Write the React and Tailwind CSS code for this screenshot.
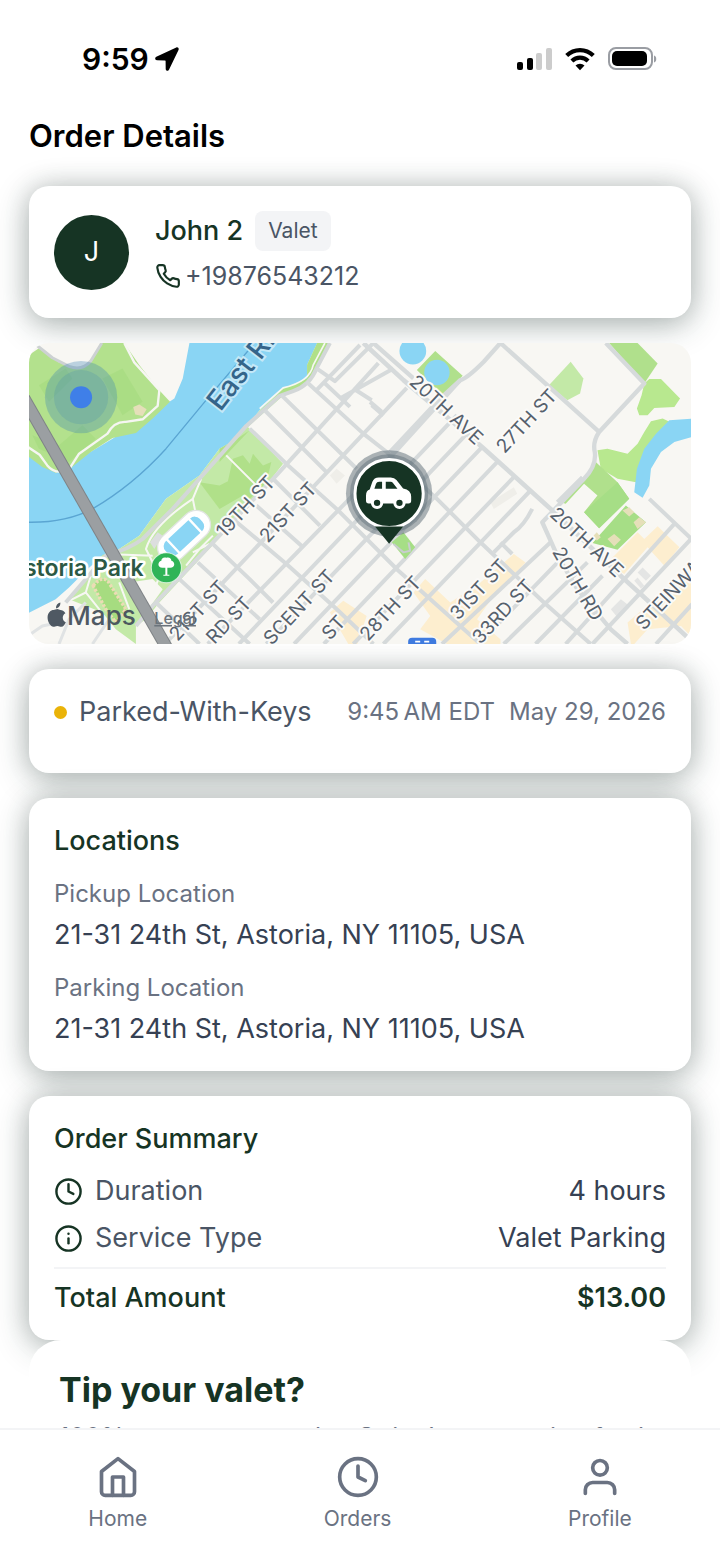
import { FiHome, FiClock, FiUser, FiPhone, FiInfo } from 'react-icons/fi'

const CARD =
  'rounded-[20px] bg-white px-[25px] shadow-[0_7px_34px_rgba(22,52,46,0.3),0_0_26px_rgba(0,0,0,0.14)]'

const locations = [
  { label: 'Pickup Location', address: '21-31 24th St, Astoria, NY 11105, USA' },
  { label: 'Parking Location', address: '21-31 24th St, Astoria, NY 11105, USA' },
]

const summary = [
  { icon: FiClock, label: 'Duration', value: '4 hours' },
  { icon: FiInfo, label: 'Service Type', value: 'Valet Parking' },
]

const tabs = [
  { icon: FiHome, label: 'Home' },
  { icon: FiClock, label: 'Orders' },
  { icon: FiUser, label: 'Profile' },
]

const streetLabels = [
  { text: '19TH ST', x: 196, y: 195, r: -47 },
  { text: '21ST ST', x: 239, y: 200, r: -47 },
  { text: '21ST ST', x: 149, y: 298, r: -47 },
  { text: 'RD ST', x: 186, y: 301, r: -47 },
  { text: 'SCENT ST', x: 243, y: 302, r: -47 },
  { text: 'ST', x: 301, y: 297, r: -47 },
  { text: '28TH ST', x: 339, y: 298, r: -47 },
  { text: '31ST ST', x: 429, y: 277, r: -47 },
  { text: '33RD ST', x: 451, y: 301, r: -47 },
  { text: '27TH ST', x: 475, y: 111, r: -47 },
  { text: 'STEINWAY', x: 614, y: 287, r: -47 },
  { text: '20TH AVE', x: 379, y: 40, r: 43 },
  { text: '20TH AVE', x: 519, y: 172, r: 43 },
  { text: '20TH RD', x: 522, y: 208, r: 60 },
]

function StatusBar() {
  return (
    <div className="flex h-[118px] shrink-0 items-center justify-between pr-[63px] pl-[82px]">
      <div className="flex items-center gap-1.5 text-black">
        <span className="text-[30px] leading-9 font-semibold">9:59</span>
        <svg className="h-6 w-6" viewBox="0 0 24 24" fill="currentColor" aria-hidden="true">
          <path d="M21.3.4 1.300 9.800c-1.800.9-1.400 3.300.7 3.400l8.100.2c.3 0 .5.2.5.5l.1 8.100c0 2.100 2.600 2.500 3.400.6L23.500 2.900C24.200 1.200 22.900-.2 21.300.4Z" />
        </svg>
      </div>
      <div className="flex items-center gap-3">
        <svg className="h-6 w-9" viewBox="0 0 36 24" aria-hidden="true">
          <rect x="0" y="15" width="6" height="8" rx="2" />
          <rect x="10" y="11" width="6" height="12" rx="2" />
          <rect x="19" y="6" width="6" height="17" rx="2" fill="#cccccc" />
          <rect x="29" y="1" width="6" height="22" rx="2" fill="#cccccc" />
        </svg>
        <svg className="h-6 w-[30px]" viewBox="0 0 30 24" fill="none" stroke="#000" strokeWidth="4.200" aria-hidden="true">
          <path d="M1.700 8.600a19 19 0 0 1 26.600 0" />
          <path d="M6.900 14a11.600 11.600 0 0 1 16.200 0" />
          <path d="M15 23.200 10.500 18.600a6.500 6.500 0 0 1 9 0Z" fill="#000" stroke="none" />
        </svg>
        <svg className="h-6 w-[50px]" viewBox="0 0 50 24" aria-hidden="true">
          <rect x="2" y="1" width="43" height="21" rx="7" fill="none" stroke="#9a9da3" strokeWidth="2" />
          <rect x="5" y="4" width="35" height="15" rx="5" />
          <path d="M47 8.500c3 .8 3 6.200 0 7Z" fill="#9a9da3" />
        </svg>
      </div>
    </div>
  )
}

function MapShapes() {
  return (
    <g transform="translate(-9 -8) scale(0.33333)" strokeLinejoin="round">
      {/* water */}
      <path
        fill="#8ad5f4"
        d="M510 24H892L862 90 862 130 790 160 720 225 650 312 600 340 540 420 440 490 360 600 300 640 250 660 200 705 150 755 110 790 27 832V360L110 412 280 310 465 190 490 130Z"
      />
      <path fill="none" stroke="#5aa5d2" strokeWidth="4" d="M27 560Q140 562 220 520 340 450 440 340L560 195 700 30" />

      {/* island */}
      <path
        fill="#b3e18d"
        d="M27 62 60 40 120 82 175 102 212 82 245 24H315L360 90 420 165 452 200 400 250 350 293 280 308 215 350 150 402 110 412 70 395 27 362Z"
      />
      <path fill="#a6dc80" d="M60 150 140 100 160 130 90 200ZM250 130 310 100 370 200 310 240ZM40 300 120 330 190 270 230 310 150 380 60 340Z" opacity=".7" />
      <path fill="none" stroke="#cdd1d3" strokeWidth="9" d="M45 24 100 68 150 94Q190 108 215 78L248 24" />
      <path
        fill="none"
        stroke="#f6f6f2"
        strokeWidth="7"
        d="M315 24 345 82 420 165 415 212 370 252 320 260Q285 258 265 295L180 355 150 402Q110 420 85 390L62 358 27 335"
      />
      <path fill="#e5dfb9" d="M342 215 360 208 382 222 370 242 348 238Z" />

      {/* shoreline park */}
      <path
        fill="#c3e9a7"
        d="M892 24H930L890 100 850 155 790 182 685 275 790 385 700 500 560 650 420 800 380 850 350 870 350 924 290 880 250 830 150 790 250 658 300 640 360 600 440 490 540 420 600 340 650 312 720 225 790 160 862 130 862 90Z"
      />
      <path fill="#b0e089" d="M892 24H930L890 100 850 155 790 182 740 215 790 160 862 130 862 90ZM640 370 670 360 690 385 700 355 730 390 755 380 740 440 690 490 620 460ZM540 440 600 450 640 430 670 450 670 480 600 520ZM600 340 650 312 690 285 600 380Z" />
      <path fill="#a6dc80" stroke="#ecdcb5" strokeWidth="10" strokeDasharray="8 5" d="M222 750Q255 710 275 750L320 820 290 860 260 820Z" />
      <path fill="#f8f7f3" d="M330 740 400 730 430 760 380 830Z" />
      <g fill="none" stroke="#f7f7f3" strokeWidth="6">
        <path d="M545 430 520 490Q400 570 380 640L420 720 400 780M520 490 528 530M150 795 200 770 215 720M620 360 720 460M260 655 400 660M200 770 240 820 290 900M300 740 330 820M500 690 540 640 580 600M520 650 570 625" />
      </g>
      <g transform="rotate(-43 492 603)">
        <rect x="402" y="560" width="185" height="86" rx="43" fill="#fff" stroke="#e2e5e3" strokeWidth="4" />
        <rect x="424" y="577" width="140" height="52" rx="20" fill="#8ad5f4" />
        <path stroke="#fff" strokeWidth="7" d="M450 572V634M540 572V634" />
      </g>
      <path fill="#dcdedf" d="M392 620 415 590 430 600 405 640Z" />

      {/* commercial blocks */}
      <path
        fill="#fdeecf"
        d="M970 795 1040 840 1012 924H985L930 830ZM1215 730 1290 800 1380 740 1480 655 1515 680 1420 780 1370 850 1440 910 1440 924H1280L1200 880 1230 840 1180 770ZM1760 680 1850 590 1870 610 1910 572 1975 635 1930 690 1880 635 1810 715ZM1820 860 2013 695V905L1980 870 1880 880 1840 924H1830Z"
      />

      {/* northern parks */}
      <path fill="#b0e08c" d="M1765 24H1850L1910 85 1870 145Z" />
      <path
        fill="#b8e88f"
        d="M1870 145 1885 132H1920L1977 190 1960 215 1900 218 1880 240 1855 240 1848 220 1862 180ZM1730 345 1760 340 1820 355 1850 325 1870 290 1890 258 1925 250 1950 262 1885 330 1845 440 1790 430 1740 400Z"
      />
      <path fill="#c3e9a7" d="M1585 150 1650 80 1688 130 1678 175 1640 195Z" />
      <path fill="#b0e08c" d="M1725 380 1790 440 1825 490 1735 578 1690 530 1730 480 1685 440ZM1620 500 1685 430 1690 445 1635 505ZM1190 105 1245 48 1327 122 1270 182Z" />
      <path fill="#a6de86" d="M1790 440 1825 490 1735 578 1690 530ZM1815 510 1875 560 1790 642 1715 622Z" />
      <path fill="#e5dfb9" d="M1805 525 1825 515 1840 530 1825 543ZM1838 560 1855 545 1875 560 1850 580ZM1718 600 1728 590 1740 605 1728 615ZM1760 610 1780 595 1800 612 1780 632Z" />
      <path
        fill="#8ad5f4"
        d="M1945 255 2013 250V305L1960 320 1920 350 1890 400 1885 450 1865 487 1840 470 1848 400 1870 340 1905 295Z"
      />
      <circle cx="1178" cy="48" r="40" fill="#8ad5f4" />
      <circle cx="1250" cy="112" r="38" fill="#8ad5f4" />

      {/* minor lots */}
      <path fill="#e4e5e4" d="M1770 820 1800 790 1825 810 1790 845ZM1850 710 1865 695 1890 720 1875 735ZM1840 735 1850 725 1870 750 1860 758Z" />
      <path fill="#efeee9" d="M930 420 950 400 975 420 950 445ZM1410 500 1480 455 1490 475 1420 520Z" />

      {/* shore road */}
      <path
        fill="none"
        stroke="#d3d7d8"
        strokeWidth="12"
        d="M930 24 890 100Q870 150 820 168L780 182 680 272 540 430 460 520 370 610Q330 640 260 660L140 800"
      />
      <path fill="none" stroke="#f7f7f3" strokeWidth="5" d="M915 24 880 90Q870 140 790 158L720 220" />

      {/* street grid */}
      <g fill="none" stroke="#d6dadb" strokeWidth="12">
        <path d="M1075 84 770 420 400 810 350 870M1160 158 437 924M1020 30 890 165M890 100 945 138 1060 24M1120 100 960 190M1320 135 1130 345 565 924" />
        <path d="M1310 240 658 924M1345 290 740 924M1385 335 823 924M1430 380 912 924M1480 425 1000 924M1530 465 1090 924M1535 520Q1510 570 1480 590L1420 650 M1440 620 1475 655" />
        <path d="M1590 620 1265 924M1640 650 1375 924M1700 680 1450 924M1745 720 1545 924M1960 565 1635 924M2010 610 1715 924M2013 805 1905 924" />
        <path d="M735 225 920 410M785 180 1010 400M860 140 1030 295 1100 350 1250 490 1380 620 1570 800 1710 924" />
        <path d="M690 280 805 390 950 520 1135 705 1380 924M760 430 900 570M710 510 850 635M640 550 800 685 945 815 1060 924" />
        <path d="M575 620 690 730 760 800M535 680 720 850M480 730 690 924M410 800 540 924M1055 210 1090 240M1055 195 1000 160M910 140 990 215" />
        <path d="M1030 24 1150 135 1385 335 1590 520 1810 730 1860 775 2000 905" strokeWidth="14" />
        <path d="M1060 24 1180 130M1440 24 1735 290M1440 24 1390 80Q1340 130 1320 135L1260 190 1110 350" strokeWidth="13" />
        <path d="M1755 24 1870 145 1735 290Q1715 320 1722 350 1728 390 1690 430L1565 560 1610 660 1670 760 1770 880 1820 924" strokeWidth="13" />
        <path d="M1685 425 1610 500M1885 490 2013 612M1050 200 1085 230M1055 205 1090 240" />
        <path d="M27 900 70 870 120 860M120 924 150 850 200 800M220 924 270 850" strokeWidth="9" stroke="#e0e3e4" />
      </g>
      <path fill="#a6de86" d="M1115 620 1150 590 1185 635 1155 670Z" />
      <path fill="none" stroke="#c8cdce" strokeWidth="6" d="M1120 625 1150 650 1170 645 1165 620" />

      {/* bridge */}
      <path stroke="#7f8386" strokeWidth="38" d="M10 180 445 940" />
      <path stroke="#9b9fa2" strokeWidth="32" d="M10 180 445 940" />

      {/* station badge */}
      <rect x="1164" y="905" width="84" height="40" rx="12" fill="#3f7be0" />
      <path stroke="#fff" strokeWidth="5" d="M1185 917H1200M1212 917H1227" />
    </g>
  )
}

function OrderMap() {
  return (
    <section aria-label="Parking map" className="overflow-hidden rounded-[20px]">
      <svg className="block h-[301px] w-full" viewBox="0 0 662 300" preserveAspectRatio="xMidYMid slice" role="img">
        <rect width="662" height="300" fill="#f8f7f3" />
        <MapShapes />

        <g fill="#56616d" stroke="#fbfaf8" strokeWidth="4" strokeLinejoin="round" paintOrder="stroke" fontSize="19">
          {streetLabels.map((s, i) => (
            <text key={i} transform={`translate(${s.x} ${s.y}) rotate(${s.r})`}>
              {s.text}
            </text>
          ))}
        </g>
        <text
          transform="translate(192 69) rotate(-52)"
          fill="#35658a"
          stroke="#c4e8f7"
          strokeWidth="4"
          paintOrder="stroke"
          fontSize="28"
          fontWeight="500"
        >
          East River
        </text>
        <text x="-4" y="232" fill="#2c5945" stroke="#fff" strokeWidth="5" strokeLinejoin="round" paintOrder="stroke" fontSize="23" fontWeight="600">
          storia Park
        </text>

        {/* park pin */}
        <circle cx="138" cy="224" r="15" fill="#2fb457" stroke="#fff" strokeOpacity=".7" />
        <path fill="#fff" d="M138 214c3-1 5 1 5 3 4 1 4 7-1 7h-3v7h2v1h-6v-1h2v-7h-3c-5 0-5-6-1-7 0-2 2-4 5-3Z" />

        {/* attribution */}
        <g fill="#46515b" opacity=".95">
          <path d="M29.500 265.200c-1.600 0-2.600.9-3.900.9-2.700 0-6 2.500-6 7.600 0 4.700 3.300 9.200 5.700 9.200 1.500 0 2.200-.9 4.100-.9s2.300.9 3.900.9c2.100 0 3.700-2.700 4.500-4.600-3.900-1.700-4-7.200-.4-9-1.300-2.200-3.300-3.300-5-3.300-1.200 0-2-.8-2.900-.8ZM28 264.400c-.2-3.200 1.600-5.300 4.300-5.800.4 3.200-1.700 5.700-4.300 5.800Z" />
          <text x="39" y="281" fontSize="26" fontWeight="500">
            Maps
          </text>
        </g>
        <text x="126" y="280" fill="#6b737b" fontSize="16" fontWeight="500" textDecoration="underline">
          Legal
        </text>

        {/* current position */}
        <circle cx="53" cy="54" r="36" fill="#3c84b4" opacity=".32" />
        <circle cx="53" cy="54" r="27" fill="#3c84b4" opacity=".2" />
        <circle cx="53" cy="54" r="11" fill="#3f7fe8" />

        {/* vehicle marker */}
        <circle cx="360" cy="150" r="43" fill="#5c6b76" opacity=".5" />
        <circle cx="360" cy="150" r="39" fill="#4b5b68" opacity=".35" />
        <circle cx="360" cy="150" r="34" fill="#163424" stroke="#fff" strokeWidth="3" />
        <path fill="#163424" d="M346 183H374L360 200Z" />
        <g transform="translate(211 -8) scale(0.33333)">
          <path
            fill="#fff"
            fillRule="evenodd"
            d="M378 480Q378 465 389 462L397 439Q402 426 416 426H452Q463 426 469 434L489 459Q513 463 513 484V496Q513 504 505 504H386Q378 504 378 496ZM403 460H426V439H417Q410 439 408 445ZM437 439V460H472L458 442Q456 439 452 439Z"
          />
          <circle cx="411" cy="502" r="14" fill="#163424" stroke="#fff" strokeWidth="9" />
          <circle cx="478" cy="502" r="14" fill="#163424" stroke="#fff" strokeWidth="9" />
        </g>
      </svg>
    </section>
  )
}

function CustomerCard() {
  return (
    <section className={`${CARD} flex items-center gap-[26px] py-[25px]`}>
      <div className="flex h-[75px] w-[75px] shrink-0 items-center justify-center rounded-full bg-[#163424] text-[27px] text-white">
        J
      </div>
      <div>
        <div className="flex items-center gap-3">
          <h2 className="text-[27px] leading-9 font-medium text-[#163424]">John 2</h2>
          <span className="rounded-lg bg-gray-100 px-[13px] text-[21px] leading-10 text-gray-600">Valet</span>
        </div>
        <a href="tel:+19876543212" className="mt-2 flex items-center gap-1 text-[25px] leading-[34px] text-gray-600">
          <FiPhone className="h-[26px] w-[26px] text-[#163424]" />
          +19876543212
        </a>
      </div>
    </section>
  )
}

function StatusCard() {
  return (
    <section className={`${CARD} flex items-center justify-between pt-[25px] pb-[43px]`}>
      <div className="flex items-center gap-3">
        <span className="h-[13px] w-[13px] rounded-full bg-[#eab308]" />
        <span className="text-[27px] leading-9 text-gray-600">Parked-With-Keys</span>
      </div>
      <div className="flex gap-3.5 text-2xl leading-9 text-gray-500">
        <span>9:45{'\u202f'}AM EDT</span>
        <span>May 29, 2026</span>
      </div>
    </section>
  )
}

function LocationsCard() {
  return (
    <section className={`${CARD} pt-[25px] pb-6`}>
      <h2 className="text-[27px] leading-9 font-medium text-[#163424]">Locations</h2>
      <dl>
        {locations.map((loc) => (
          <div key={loc.label} className="mt-[18px]">
            <dt className="text-2xl leading-[34px] text-gray-500">{loc.label}</dt>
            <dd className="mt-1.5 text-[27px] leading-9 text-gray-700">{loc.address}</dd>
          </div>
        ))}
      </dl>
    </section>
  )
}

function SummaryCard() {
  return (
    <section className={`${CARD} pt-[25px] pb-6`}>
      <h2 className="mb-4 text-[27px] leading-9 font-medium text-[#163424]">Order Summary</h2>
      <dl className="flex flex-col gap-[11px] text-[27px] leading-9">
        {summary.map(({ icon: Icon, label, value }) => (
          <div key={label} className="flex items-center justify-between">
            <dt className="flex items-center gap-3 text-gray-600">
              <Icon className="h-[29px] w-[29px] text-[#163424]" />
              {label}
            </dt>
            <dd className="text-gray-700">{value}</dd>
          </div>
        ))}
        <div className="flex justify-between border-t-2 border-gray-100 pt-[11px] text-[#163424]">
          <dt className="font-medium">Total Amount</dt>
          <dd className="font-semibold">$13.00</dd>
        </div>
      </dl>
    </section>
  )
}

function TabBar() {
  return (
    <nav className="flex h-[137px] shrink-0 items-start justify-around border-t-2 border-gray-100 bg-white pt-[25px]">
      {tabs.map(({ icon: Icon, label }) => (
        <button key={label} type="button" className="flex flex-col items-center gap-1.5 text-gray-500">
          <Icon className="h-11 w-11" />
          <span className="text-[21px] leading-7">{label}</span>
        </button>
      ))}
    </nav>
  )
}

export default function App() {
  return (
    <div className="flex h-screen flex-col overflow-hidden bg-white font-['Inter',sans-serif]">
      <main className="min-h-0 flex-1 overflow-y-auto [scrollbar-width:none]">
        <StatusBar />
        <div className="px-[29px]">
          <h1 className="text-[31px] leading-9 font-semibold text-black">Order Details</h1>
          <div className="mt-8 flex flex-col gap-[25px]">
            <CustomerCard />
            <OrderMap />
            <StatusCard />
            <LocationsCard />
            <SummaryCard />
          </div>
          <section className="relative rounded-[32px] bg-white px-[30px] pt-7 pb-10">
            <h2 className="text-[34px] leading-[44px] font-bold text-[#163424]">Tip your valet?</h2>
            <p className="mt-2 text-[25px] leading-[34px] text-gray-500">
              100% goes to your valet. Stripe's processing fee is deducted.
            </p>
          </section>
        </div>
      </main>
      <TabBar />
    </div>
  )
}
